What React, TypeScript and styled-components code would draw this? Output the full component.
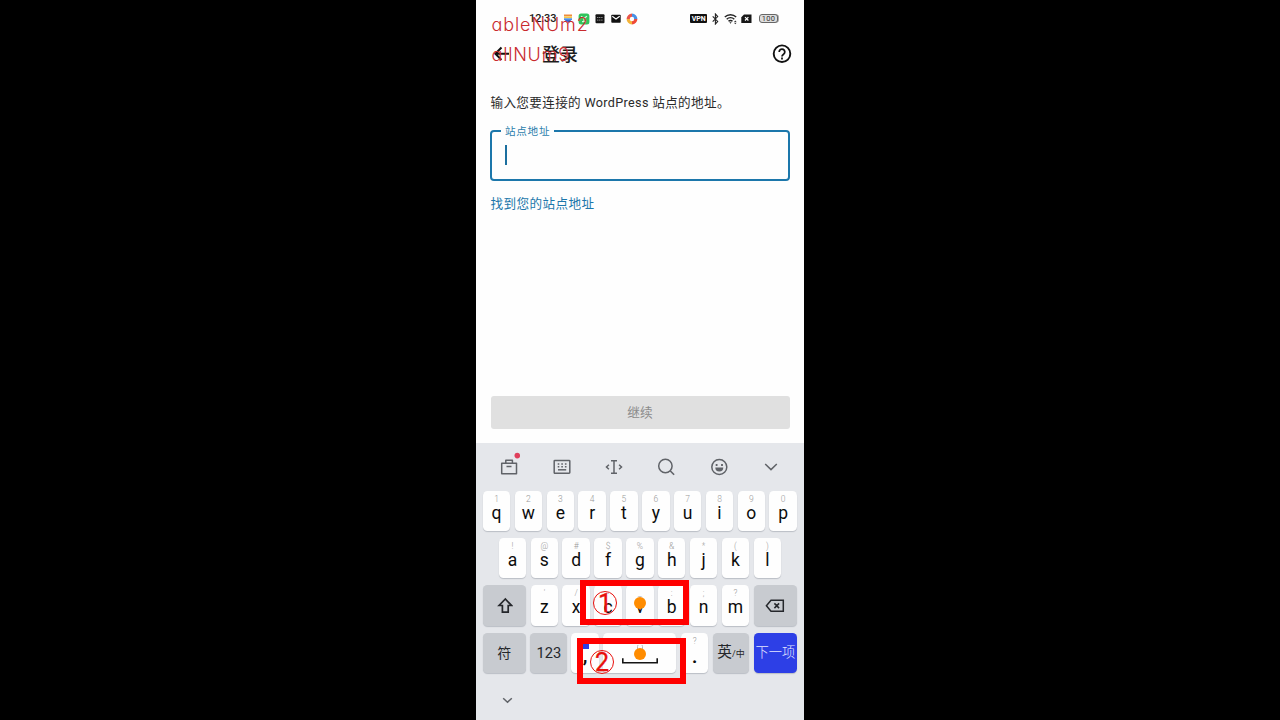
import React from 'react';
import styled, { createGlobalStyle } from 'styled-components';

const Global = createGlobalStyle`
  * { box-sizing: border-box; }
  body { margin: 0; background: #000; overflow: hidden; }
  svg { display: block; flex: none; }
`;

const Stage = styled.div`
  width: 1280px;
  height: 720px;
  display: flex;
  justify-content: center;
  background: #000;
`;
const Phone = styled.div`
  position: relative;
  width: 328px;
  height: 720px;
  display: flex;
  flex-direction: column;
  background: #fefefe;
  overflow: hidden;
  font-family: Roboto, 'Noto Sans CJK SC', sans-serif;
  color: #1d1d1d;
`;
const StatusBar = styled.div`
  height: 37px;
  padding: 0 25px 0 53px;
  display: flex;
  align-items: center;
  justify-content: space-between;
`;
const StatusGroup = styled.div<{ $gap: number }>`
  display: flex;
  align-items: center;
  gap: ${(p) => p.$gap}px;
`;
const Time = styled.span`
  width: 29.3px;
  font-size: 11px;
  font-weight: 500;
  line-height: 14px;
  padding-top: 1px;
  letter-spacing: -0.1px;
  white-space: nowrap;
`;
const Vpn = styled.span`
  width: 16.6px;
  height: 9px;
  border-radius: 1px;
  background: #111;
  color: #fff;
  font-size: 7px;
  font-weight: 700;
  line-height: 10px;
  text-align: center;
`;
const Battery = styled.span`
  width: 19px;
  height: 9px;
  margin: 0 1px 0 -1px;
  border: 1px solid #666;
  border-radius: 3px;
  background: #dedede;
  color: #333;
  font-size: 7.5px;
  line-height: 8px;
  text-align: center;
  letter-spacing: 0.3px;
  box-shadow: 1px 0 0 -0.2px #999;
`;
const AppBar = styled.header`
  height: 34px;
  padding: 0 12.5px 0 15px;
  display: flex;
  align-items: center;
`;
const Title = styled.h1`
  flex: 1;
  margin: 2px 0 0 32px;
  font-size: 18px;
  line-height: 26px;
  font-weight: 500;
`;
const Content = styled.main`
  height: 372px;
  padding: 22px 14.5px 14.5px;
  display: flex;
  flex-direction: column;
`;
const Prompt = styled.p`
  margin: 0;
  font-size: 12.6px;
  line-height: 20px;
  letter-spacing: 0.34px;
  white-space: nowrap;
  color: #2a2a2a;
`;
const Field = styled.fieldset`
  height: 57px;
  margin: 10.9px 0 0 -0.3px;
  padding: 7px 12.8px;
  border: 2px solid #1c77ab;
  border-radius: 4px;
  min-width: 0;
`;
const Legend = styled.legend`
  margin-left: -4px;
  padding: 1px 4px 0;
  height: 14px;
  font-size: 10.6px;
  line-height: 14px;
  letter-spacing: 0.7px;
  color: #2d7fac;
`;
const Caret = styled.div`
  width: 2px;
  height: 20px;
  background: #1c6f9f;
`;
const Link = styled.a`
  margin-top: 12.7px;
  font-size: 12.6px;
  line-height: 20px;
  letter-spacing: 0.4px;
  color: #1c77ab;
`;
const Continue = styled.button`
  height: 33px;
  margin: auto 0 0;
  padding: 1px 0 0;
  border: 0;
  border-radius: 3px;
  background: #e0e0e0;
  color: #8b8b8b;
  font: 400 12.7px/32px Roboto, 'Noto Sans CJK SC', sans-serif;
`;
const Keyboard = styled.section`
  flex: 1;
  background: #e5e7eb;
  color: #0c0c0c;
`;
const Tools = styled.div`
  height: 48px;
  padding: 0 8px 0 7.3px;
  display: grid;
  grid-template-columns: repeat(6, 52.3px);
  justify-items: center;
  align-items: center;
`;
const Keys = styled.div`
  display: flex;
  flex-direction: column;
  gap: 6.9px;
`;
const KeyRow = styled.div`
  display: flex;
  justify-content: center;
  gap: 4.35px;
  padding: 0 6.8px 0 6.6px;
  height: 40.3px;
`;
type Tone = 'light' | 'gray' | 'blue';
const tones = { light: '#fefefe', gray: '#c8cbd0', blue: '#2d3fe6' };
const Key = styled.div<{ $tone?: Tone; $w?: number; $grow?: boolean }>`
  width: ${(p) => p.$w ?? 27.5}px;
  flex: ${(p) => (p.$grow ? '1' : 'none')};
  height: 40.3px;
  border-radius: 4.5px;
  background: ${(p) => tones[p.$tone ?? 'light']};
  box-shadow: 0 1px 1px rgba(80, 85, 100, 0.28);
  display: flex;
  flex-direction: column;
  align-items: center;
  justify-content: ${(p) => (!p.$tone || p.$tone === 'light' ? 'flex-start' : 'center')};
`;
const Hint = styled.span`
  height: 8px;
  margin-top: 4px;
  font-size: 8.5px;
  font-weight: 300;
  line-height: 9px;
  color: #999;
`;
const Letter = styled.span`
  font-size: 17.5px;
  line-height: 20px;
  height: 20px;
`;
const Mark = styled(Letter)`
  font-size: 21px;
  font-weight: 500;
  line-height: 22px;
`;
const CommaBadge = styled.span`
  width: 8px;
  height: 6px;
  margin: 10px 0 -5px;
  background: #2d3fe6;
`;
const Label = styled.span<{ $size: number; $light?: boolean }>`
  font-size: ${(p) => p.$size}px;
  line-height: 20px;
  white-space: nowrap;
  color: ${(p) => (p.$light ? '#e4e6ff' : '#25272b')};
  font-weight: ${(p) => (p.$light ? 300 : 400)};
`;
const Small = styled.small`
  font-size: 9px;
`;
const SpaceFace = styled.div`
  padding-top: 12px;
`;
const Collapse = styled.div`
  padding: 24px 0 0 26.3px;
`;
const Highlight = styled.div<{ $x: number; $y: number; $h: number }>`
  position: absolute;
  left: ${(p) => p.$x}px;
  top: ${(p) => p.$y}px;
  width: 109px;
  height: ${(p) => p.$h}px;
  border: 6px solid #f00;
`;
const CircledNumber = styled.span<{ $x: number; $y: number }>`
  position: absolute;
  left: ${(p) => p.$x}px;
  top: ${(p) => p.$y}px;
  width: 24px;
  height: 24px;
  border: 1.5px solid #e8100c;
  border-radius: 50%;
  color: #e8100c;
  font: 400 25px/23px Roboto, sans-serif;
  -webkit-text-stroke: 0.3px #e8100c;
  display: flex;
  justify-content: center;
`;
const Dot = styled.i<{ $y: number }>`
  position: absolute;
  left: 157.7px;
  top: ${(p) => p.$y}px;
  width: 12.5px;
  height: 12.5px;
  border-radius: 50%;
  background: #ff8c00;
`;
const DebugText = styled.span<{ $y: number; $track: number }>`
  position: absolute;
  left: 15.5px;
  top: ${(p) => p.$y}px;
  font: 300 18px/22px Inter, sans-serif;
  font-feature-settings: 'cv11' 1;
  letter-spacing: ${(p) => p.$track}px;
  color: #c92a2e;
  white-space: nowrap;
`;

const line = { fill: 'none', stroke: '#606368', strokeWidth: 1.5 } as const;

const AppIcons = () => (
  <>
    <svg width="12" height="12" viewBox="0 0 12 12">
      <path d="M2 2.4h8" stroke="#ef8b3a" strokeWidth="1.8" />
      <path d="M2 4.3h8" stroke="#f3c64b" strokeWidth="1.8" />
      <path d="M2 6.2h8" stroke="#4c8ee8" strokeWidth="1.8" />
      <path d="M3 7.1h6L8 9.3H4z" fill="#3b66cf" />
    </svg>
    <svg width="12" height="12" viewBox="0 0 12 12">
      <rect x=".6" y=".4" width="10.8" height="11" rx="2.5" fill="#2fc45c" />
      <path d="M3 3.3l3 2 3-2M4 8.6h4M6 5.3v3" fill="none" stroke="#d9f7dd" strokeWidth="1.2" />
    </svg>
    <svg width="12" height="12" viewBox="0 0 12 12">
      <rect x="1.5" y="1.3" width="9" height="9" rx="1" fill="#151515" />
      <path d="M3 4.5h6M3 7.1h6" stroke="#8b8b8b" strokeWidth="1" strokeDasharray="1.3 .5" />
    </svg>
    <svg width="12" height="12" viewBox="0 0 12 12">
      <rect x="1.3" y="1.8" width="9.4" height="8" rx=".8" fill="#111" />
      <path d="M2.3 3.2L6 6l3.7-2.8" fill="none" stroke="#fff" strokeWidth="1.1" />
    </svg>
    <svg width="12" height="12" viewBox="0 0 12 12" fill="none" strokeWidth="3.2">
      <path d="M2.2 6A3.8 3.8 0 0 1 6 2.2" stroke="#e9554a" />
      <path d="M6 2.2A3.8 3.8 0 0 1 9.8 6" stroke="#4a90e6" />
      <path d="M9.8 6A3.8 3.8 0 0 1 6 9.8" stroke="#ef4a38" />
      <path d="M6 9.8A3.8 3.8 0 0 1 2.2 6" stroke="#f3b43a" />
    </svg>
  </>
);

const hinted = (letters: string, hints: string) =>
  letters.split('').map((c, i) => (
    <Key key={c}>
      <Hint>{hints[i]}</Hint>
      <Letter>{c}</Letter>
    </Key>
  ));

export default function App() {
  return (
    <Stage>
      <Global />
      <Phone>
        <StatusBar>
          <StatusGroup $gap={4}>
            <Time>12:33</Time>
            <AppIcons />
          </StatusGroup>
          <StatusGroup $gap={3.8}>
            <Vpn>VPN</Vpn>
            <svg width="9" height="12" viewBox="0 0 9 12">
              <path d="M1.7 3.4l5 5L4.4 11V1l2.3 2.6-5 5" fill="none" stroke="#222" strokeWidth="1.1" />
            </svg>
            <svg width="14" height="12" viewBox="0 0 14 12">
              <path d="M.8 4a8.2 8.2 0 0 1 11.4 0M2.7 6.2a5.4 5.4 0 0 1 7.6 0M4.5 8.3a2.8 2.8 0 0 1 4 0" fill="none" stroke="#222" strokeWidth="1.4" />
              <path d="M5.4 9.3h2.2L6.5 10.7z" fill="#222" />
              <path d="M10 9l1.3-1.6L12.6 9zM10 9.8h2.6l-1.3 1.5z" fill="#333" />
            </svg>
            <svg width="11" height="10" viewBox="0 0 11 10">
              <path d="M3 .5h7.5v8.6H.3V3.3z" fill="#171717" />
              <path d="M4 3.1l3.4 3.4M7.4 3.1L4 6.5" stroke="#fff" strokeWidth="1.2" />
            </svg>
            <span />
            <Battery>100</Battery>
          </StatusGroup>
        </StatusBar>
        <AppBar>
          <svg width="19" height="18" viewBox="0 0 19 18">
            <path d="M18 8.7H4.3M10.5 2.5L4.3 8.7l6.2 6.2" fill="none" stroke="#111" strokeWidth="2" />
          </svg>
          <Title>登录</Title>
          <svg width="20" height="20" viewBox="0 0 20 20">
            <circle cx="10" cy="9.7" r="8.3" fill="none" stroke="#111" strokeWidth="1.9" />
            <path d="M7.2 8a2.8 2.8 0 1 1 4.5 2.1C10.6 10.9 10 11.3 10 12.5" fill="none" stroke="#111" strokeWidth="1.8" />
            <path d="M9.1 13.6h1.8v1.8H9.1z" fill="#111" />
          </svg>
        </AppBar>
        <Content>
          <Prompt>输入您要连接的 WordPress 站点的地址。</Prompt>
          <Field>
            <Legend>站点地址</Legend>
            <Caret />
          </Field>
          <Link>找到您的站点地址</Link>
          <Continue>继续</Continue>
        </Content>
        <Keyboard>
          <Tools>
            <svg width="22" height="30" viewBox="0 0 22 30">
              <path d="M3.7 11.2h14.8v10.6H3.7zM7.8 11V8.2h6.6V11M8.5 14.6h5" {...line} strokeLinejoin="round" />
              <circle cx="19.3" cy="3.6" r="2.8" fill="#df3f5b" />
            </svg>
            <svg width="18" height="18" viewBox="0 0 18 18">
              <rect x="1.2" y="2.4" width="15.6" height="12.9" rx=".7" {...line} />
              <path d="M4.7 6.1h9M4.7 8.7h9" {...line} strokeDasharray="1.6 2" />
              <path d="M5 11.8h8.2" {...line} />
            </svg>
            <svg width="18" height="18" viewBox="0 0 18 18">
              <path d="M9 3v12M6 2.8h6M6 15.3h6M3.9 6.8L1.5 9l2.4 2.2M14.1 6.8L16.5 9l-2.4 2.2" {...line} />
            </svg>
            <svg width="18" height="18" viewBox="0 0 18 18">
              <circle cx="8.4" cy="8" r="6.7" {...line} />
              <path d="M13.1 12.7l4 4" {...line} strokeWidth={1.6} />
            </svg>
            <svg width="18" height="18" viewBox="0 0 18 18">
              <circle cx="9.3" cy="9" r="7.5" {...line} />
              <path d="M5.3 9.6h8a4 4 0 0 1-8 0zM5.7 6h1.8v1.9H5.7zM11.1 6h1.8v1.9h-1.8z" fill="#606368" />
            </svg>
            <svg width="14" height="10" viewBox="0 0 14 10">
              <path d="M1.2 2L7 7.6 12.8 2" {...line} />
            </svg>
          </Tools>
          <Keys>
            <KeyRow>{hinted('qwertyuiop', '1234567890')}</KeyRow>
            <KeyRow>{hinted('asdfghjkl', '!@#$%&*()')}</KeyRow>
            <KeyRow>
              <Key $tone="gray" $w={43.5}>
                <svg width="16" height="18" viewBox="0 0 16 18">
                  <path d="M8.3 2L2.1 8.5h3.3v6.7h5.8V8.5h3.3z" fill="none" stroke="#25272b" strokeWidth="1.7" />
                </svg>
              </Key>
              {hinted('zxcvbnm', "'/-_:;?")}
              <Key $tone="gray" $w={43.5}>
                <svg width="20" height="14" viewBox="0 0 20 14">
                  <path d="M6 1.2h12.3v11.1H6L1.4 6.8zM9.4 4.4l4.7 4.7M14.1 4.4L9.4 9.1" fill="none" stroke="#25272b" strokeWidth="1.5" />
                </svg>
              </Key>
            </KeyRow>
            <KeyRow>
              <Key $tone="gray" $w={43.5}><Label $size={14}>符</Label></Key>
              <Key $tone="gray" $w={36.7}><Label $size={14.7}>123</Label></Key>
              <Key>
                <CommaBadge />
                <Mark>,</Mark>
              </Key>
              <Key $grow>
                <SpaceFace>
                  <svg width="36" height="20" viewBox="0 0 36 20">
                    <path d="M15.5 6V1.5a2.5 2.5 0 0 1 5 0V6" fill="none" stroke="#b7b9c0" strokeWidth="1" />
                    <path d="M.8 13.2v4.5h34.4v-4.5" fill="none" stroke="#151515" strokeWidth="1.6" />
                  </svg>
                </SpaceFace>
              </Key>
              <Key><Hint>?</Hint><Mark>.</Mark></Key>
              <Key $tone="gray" $w={36.7}><Label $size={14.7}>英<Small>/中</Small></Label></Key>
              <Key $tone="blue" $w={43.5}><Label $size={13.3} $light>下一项</Label></Key>
            </KeyRow>
          </Keys>
          <Collapse>
            <svg width="11" height="8" viewBox="0 0 11 8">
              <path d="M1.2 1.2l4.3 4 4.3-4" {...line} />
            </svg>
          </Collapse>
        </Keyboard>
        <DebugText $y={14} $track={0.9}>ableNUm2</DebugText>
        <DebugText $y={44} $track={0.8}>allNUm9</DebugText>
        <Highlight $x={104} $y={580} $h={45} />
        <Highlight $x={101} $y={638} $h={46} />
        <CircledNumber $x={117} $y={591}>1</CircledNumber>
        <CircledNumber $x={114} $y={649.5}>2</CircledNumber>
        <Dot $y={596.7} />
        <Dot $y={647.5} />
      </Phone>
    </Stage>
  );
}
